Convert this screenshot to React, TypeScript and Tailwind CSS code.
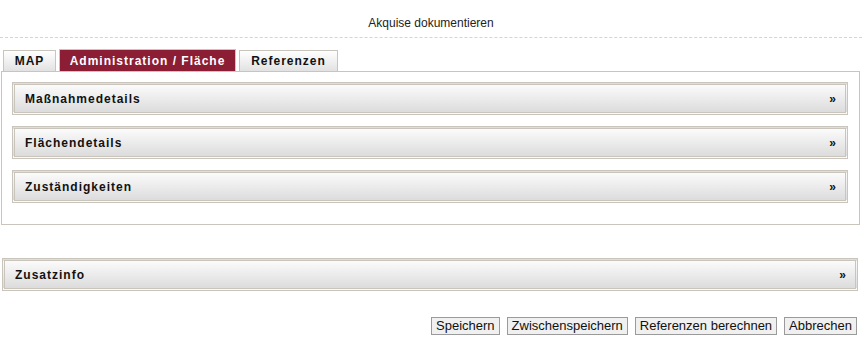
import React from "react";

const Header = ({ label, className = "" }: { label: string; className?: string }) => (
  <div
    className={`flex h-[33px] items-center justify-between border-[3px] border-double border-[#c9c5bd] bg-gradient-to-b from-[#fbfbfb] to-[#dcdcdc] pl-[10px] pr-[9px] ${className}`}
  >
    <span className="text-[12px] font-bold tracking-[1px] text-[#111]">{label}</span>
    <span className="text-[12px] font-bold text-[#111]">»</span>
  </div>
);

export default function App() {
  return (
    <div
      className="relative h-[341px] w-[862px] overflow-hidden bg-white text-[#111]"
      style={{ fontFamily: '"Liberation Sans", Arial, sans-serif' }}
    >
      <div className="h-[38px] border-b border-dashed border-[#d4d4d4] pt-[15px] text-center text-[12px] leading-[16px] text-[#222]">
        Akquise dokumentieren
      </div>

      <div className="ml-[3px] mt-[11px] flex items-end gap-[3px]">
        <div className="flex h-[21px] w-[53px] items-center justify-center border border-b-0 border-[#c9c5bd] bg-gradient-to-b from-[#ffffff] to-[#e2e2e2] text-[12px] font-bold tracking-[1px]">
          MAP
        </div>
        <div className="flex h-[22px] w-[177px] items-center justify-center border border-b-0 border-[#c9c5bd] bg-[#8b1d34] text-[12px] font-bold tracking-[1px] text-white">
          Administration / Fläche
        </div>
        <div className="flex h-[21px] w-[99px] items-center justify-center border border-b-0 border-[#c9c5bd] bg-gradient-to-b from-[#ffffff] to-[#e2e2e2] text-[12px] font-bold tracking-[1px]">
          Referenzen
        </div>
      </div>

      <div className="ml-[1px] flex h-[154px] w-[859px] flex-col gap-[11px] border border-[#c9c5bd] pl-[10px] pr-[11px] pt-[10px]">
        <Header label="Maßnahmedetails" />
        <Header label="Flächendetails" />
        <Header label="Zuständigkeiten" />
      </div>

      <div className="ml-[2px] mt-[33px] w-[856px]">
        <Header label="Zusatzinfo" />
      </div>

      <div className="mr-[5px] mt-[26px] flex justify-end gap-[7px]">
        {["Speichern", "Zwischenspeichern", "Referenzen berechnen", "Abbrechen"].map((b) => (
          <button
            key={b}
            className="h-[18px] border border-[#9a9a9a] bg-[#f0f0f0] px-[4px] text-[13px] leading-[16px] text-[#111]"
          >
            {b}
          </button>
        ))}
      </div>
    </div>
  );
}
